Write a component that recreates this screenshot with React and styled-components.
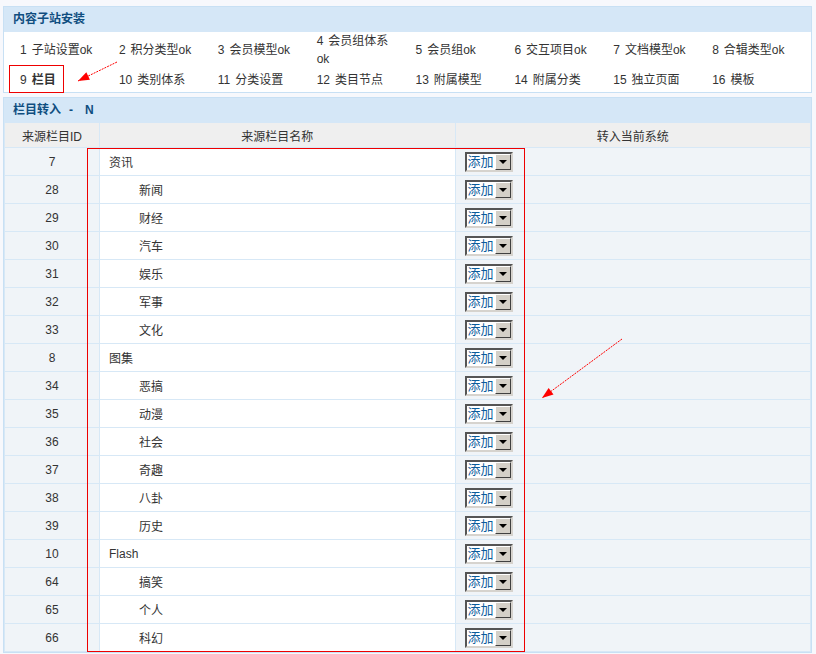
import React from "react";
import styled, { createGlobalStyle } from "styled-components";

const GlobalStyle = createGlobalStyle`
  html, body {
    margin: 0;
    padding: 0;
    background: #f7f8fc;
    font-family: "Liberation Sans", "Noto Sans CJK SC", sans-serif;
    font-size: 12px;
    color: #333;
  }
`;

const Page = styled.div`
  position: relative;
  padding: 6px 4px 0 3px;
  width: 809px;
`;

const Panel = styled.div`
  border: 1px solid #c8e0f4;
  background: #fff;
  margin-bottom: ${(p) => p.gap || 0}px;
`;

const PanelHead = styled.div`
  height: 25px;
  line-height: 25px;
  padding-left: 9px;
  background: #d5e7f7;
  color: #0f4e80;
  font-weight: bold;
  font-size: 12px;
`;

const Accent = styled.span`
  margin-left: ${(p) => p.ml || 0}px;
`;

const NavGrid = styled.div`
  display: grid;
  grid-template-columns: repeat(8, 1fr);
  grid-template-rows: 36px 24px;
  align-items: center;
  padding: 0 8px;
`;

const NavItem = styled.div`
  padding-left: 8px;
  line-height: 18px;
  color: #333;
  font-weight: ${(p) => (p.active ? "bold" : "normal")};
`;

const Num = styled.span`
  font-weight: normal;
  margin-right: 5px;
`;

const Table = styled.table`
  width: 100%;
  border-collapse: collapse;
  table-layout: fixed;
`;

const Th = styled.th`
  height: 24px;
  padding: 0;
  background: #efefef;
  font-weight: normal;
  color: #333;
  border: 1px solid #d7e8f6;
  border-top: none;
  text-align: center;
  width: ${(p) => p.w || "auto"};
`;

const Td = styled.td`
  height: 27px;
  border: 1px solid #d7e8f6;
  background: ${(p) => (p.white ? "#fff" : "#f0f4f8")};
  text-align: ${(p) => p.align || "left"};
  padding: 0 0 0 ${(p) => p.pl || 0}px;
  color: #333;
`;

const Select = styled.div`
  display: inline-flex;
  width: 48px;
  height: 20px;
  box-sizing: border-box;
  border: 2px solid;
  border-color: #555 #d6d3ce #d6d3ce #555;
  background: #fff;
  vertical-align: middle;
`;

const SelText = styled.span`
  flex: 1;
  color: #0b5c9c;
  font-size: 13px;
  line-height: 16px;
  padding-left: 1px;
`;

const SelBtn = styled.span`
  width: 16px;
  box-sizing: border-box;
  background: #d4d0c8;
  border: 1px solid;
  border-color: #fff #404040 #404040 #fff;
  display: flex;
  align-items: center;
  justify-content: center;
  &::after {
    content: "";
    border-left: 4px solid transparent;
    border-right: 4px solid transparent;
    border-top: 4px solid #000;
  }
`;

const Mark = styled.div`
  position: absolute;
  left: ${(p) => p.x}px;
  top: ${(p) => p.y}px;
  width: ${(p) => p.w}px;
  height: ${(p) => p.h}px;
  border: 1px solid #e00;
  box-sizing: border-box;
  pointer-events: none;
`;

const Overlay = styled.svg`
  position: absolute;
  left: 0;
  top: 0;
  pointer-events: none;
`;

const navItems = [
  [1, "子站设置ok"],
  [2, "积分类型ok"],
  [3, "会员模型ok"],
  [4, "会员组体系", "ok"],
  [5, "会员组ok"],
  [6, "交互项目ok"],
  [7, "文档模型ok"],
  [8, "合辑类型ok"],
  [9, "栏目"],
  [10, "类别体系"],
  [11, "分类设置"],
  [12, "类目节点"],
  [13, "附属模型"],
  [14, "附属分类"],
  [15, "独立页面"],
  [16, "模板"],
];

const rows = [
  [7, "资讯", 0],
  [28, "新闻", 1],
  [29, "财经", 1],
  [30, "汽车", 1],
  [31, "娱乐", 1],
  [32, "军事", 1],
  [33, "文化", 1],
  [8, "图集", 0],
  [34, "恶搞", 1],
  [35, "动漫", 1],
  [36, "社会", 1],
  [37, "奇趣", 1],
  [38, "八卦", 1],
  [39, "历史", 1],
  [10, "Flash", 0],
  [64, "搞笑", 1],
  [65, "个人", 1],
  [66, "科幻", 1],
];

const Arrow = ({ x1, y1, x2, y2 }) => {
  const a = Math.atan2(y2 - y1, x2 - x1);
  const len = 12;
  const spread = 0.35;
  const p1 = [x2 - len * Math.cos(a - spread), y2 - len * Math.sin(a - spread)];
  const p2 = [x2 - len * Math.cos(a + spread), y2 - len * Math.sin(a + spread)];
  return (
    <g>
      <line x1={x1} y1={y1} x2={x2} y2={y2} stroke="#f00" strokeWidth="1" strokeDasharray="2 1" />
      <polygon points={`${x2},${y2} ${p1[0]},${p1[1]} ${p2[0]},${p2[1]}`} fill="#f00" />
    </g>
  );
};

export default function App() {
  return (
    <>
      <GlobalStyle />
      <Page>
        <Panel gap={4}>
          <PanelHead>内容子站安装</PanelHead>
          <NavGrid>
            {navItems.map(([n, label, extra]) => (
              <NavItem key={n} active={n === 9}>
                <Num>{n}</Num>
                {label}
                {extra && (
                  <>
                    <br />
                    {extra}
                  </>
                )}
              </NavItem>
            ))}
          </NavGrid>
        </Panel>
        <Panel>
          <PanelHead>
            栏目转入<Accent ml={8}>-</Accent>
            <Accent ml={12}>N</Accent>
          </PanelHead>
          <Table>
            <thead>
              <tr>
                <Th w="94px">来源栏目ID</Th>
                <Th>来源栏目名称</Th>
                <Th>转入当前系统</Th>
              </tr>
            </thead>
            <tbody>
              {rows.map(([id, name, level], i) => (
                <tr key={i}>
                  <Td align="center">{id}</Td>
                  <Td white pl={level ? 39 : 9}>{name}</Td>
                  <Td pl={9}>
                    <Select>
                      <SelText>添加</SelText>
                      <SelBtn />
                    </Select>
                  </Td>
                </tr>
              ))}
            </tbody>
          </Table>
        </Panel>
        <Mark x={87} y={148} w={438} h={504} />
        <Mark x={9} y={65} w={55} h={28} />
        <Overlay width="816" height="654">
          <Arrow x1={117} y1={62} x2={78} y2={81} />
          <Arrow x1={622} y1={339} x2={542} y2={398} />
        </Overlay>
      </Page>
    </>
  );
}
